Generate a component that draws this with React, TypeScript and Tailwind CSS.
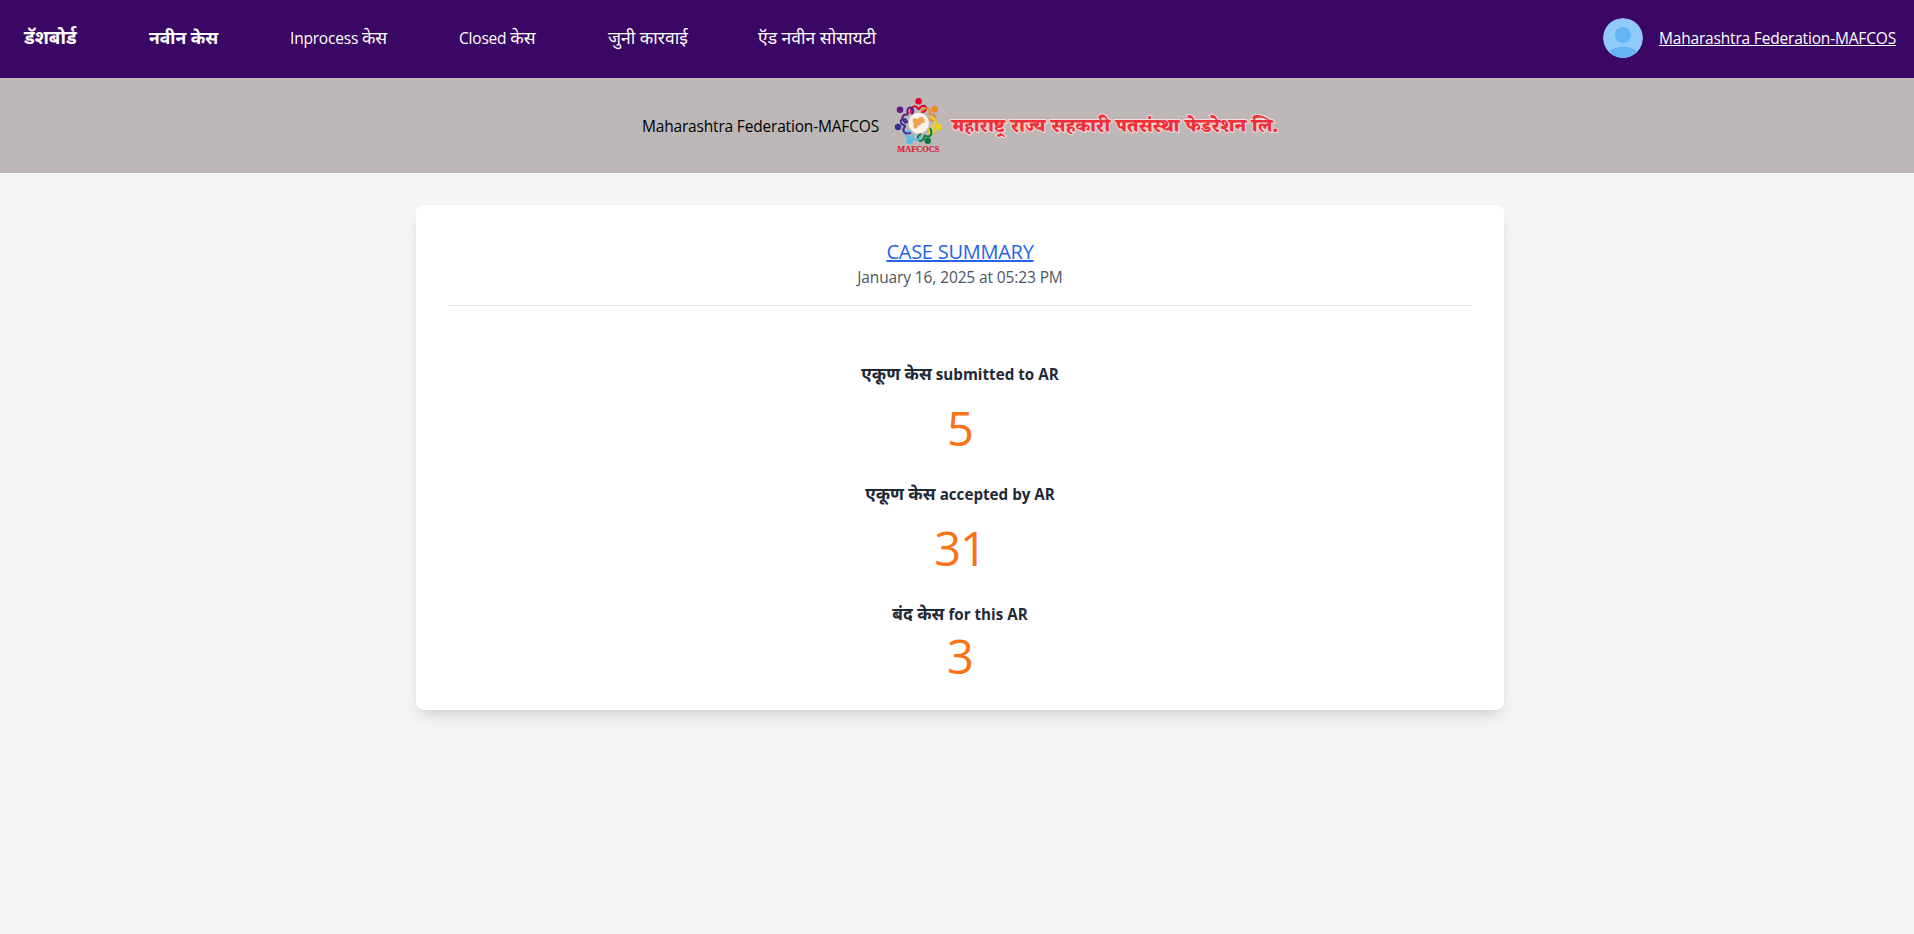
const navItems = [
  { deva: 'डॅशबोर्ड', box: 'w-[125px] font-bold', size: 'text-[18.7px]' },
  { deva: 'नवीन केस', box: 'w-[141px] font-bold', size: 'text-[17.5px]' },
  { latin: 'Inprocess', deva: 'केस', box: 'w-[169px]', size: 'text-[17.5px]' },
  { latin: 'Closed', deva: 'केस', box: 'w-[149px]', size: 'text-[17.5px]' },
  { deva: 'जुनी कारवाई', box: 'w-[150px]', size: 'text-[17.5px]' },
  { deva: 'ऍड नवीन सोसायटी', box: 'w-[130px]', size: 'text-[17.5px]' },
];

const stats = [
  { deva: 'एकूण केस', latin: 'submitted to AR', value: '5', gap: 'mt-[18px]' },
  { deva: 'एकूण केस', latin: 'accepted by AR', value: '31', gap: 'mt-[18px]' },
  { deva: 'बंद केस', latin: 'for this AR', value: '3', gap: 'mt-1.5' },
];

const people = [
  { x: 116, y: 33, turn: 0, color: '#e4032e' },
  { x: 164, y: 57, turn: 51.4, color: '#ee8a1d' },
  { x: 176, y: 110, turn: 102.8, color: '#ecd21c' },
  { x: 143, y: 151, turn: 154.3, color: '#0b7a3b' },
  { x: 89, y: 151, turn: 205.7, color: '#56bdea' },
  { x: 54, y: 110, turn: 257.1, color: '#3b3092' },
  { x: 60, y: 58, turn: 308.6, color: '#5a1f85' },
];

function Avatar() {
  return (
    <svg viewBox="0 0 40 40" className="size-10 shrink-0 rounded-full">
      <circle cx="20" cy="20" r="20" fill="#90caf9" />
      <circle cx="20" cy="17" r="8" fill="#64b5f6" />
      <path d="M6 33.5C9.5 30.5 14.5 28.7 20 28.7s10.5 1.8 14 4.8C30.5 37.5 25.5 40 20 40S9.5 37.5 6 33.5Z" fill="#64b5f6" />
    </svg>
  );
}

function Logo() {
  return (
    <svg viewBox="42 20 150 170" className="h-[56.667px] w-[50px] shrink-0">
      {people.map((p) => (
        <g key={p.color}>
          <circle cx={p.x} cy={p.y} r="9.8" fill={p.color} />
          <path
            d="M92 67C92 46 107 43 115 56M117 56C124 43 140 43 138 57Q136 65 126 65"
            transform={`rotate(${p.turn} 116 98)`}
            fill="none"
            stroke={p.color}
            strokeWidth="5.8"
            strokeLinecap="round"
          />
        </g>
      ))}
      <circle cx="116" cy="98" r="31" fill="#fbf1e8" />
      <path d="M99 85l9-1 4 2 7-5 10-1 1 5 5 2-2 10-7 2-5 5-7 2-3 7-7 2-4-8 1-8-3-6Z" fill="#e8a552" />
      <text
        x="52"
        y="186"
        textLength="126"
        lengthAdjust="spacingAndGlyphs"
        fontSize="21.5"
        fontWeight="700"
        fill="#dc1f40"
        stroke="#dc1f40"
        strokeWidth="0.6"
        className="font-['Liberation_Serif',serif]"
      >
        MAFCOCS
      </text>
    </svg>
  );
}

export default function App() {
  return (
    <div className="min-h-screen bg-[#f5f5f5] font-['Open_Sans','Noto_Sans',sans-serif] text-base text-black">
      <header className="flex h-[78px] items-center bg-[#3b0764] pb-0.5 pl-6 pr-[18px] text-white">
        <nav className="mb-0.5 flex flex-1">
          {navItems.map((n) => (
            <div key={n.box} className={`h-6 whitespace-nowrap leading-6 ${n.box}`}>
              {n.latin && <span className="text-[15.5px] tracking-[-0.2px]">{n.latin} </span>}
              <span className={n.size}>{n.deva}</span>
            </div>
          ))}
        </nav>
        <Avatar />
        <a className="ml-4 w-[237px] whitespace-nowrap text-[15.5px] leading-6 tracking-[-0.18px] underline">
          Maharashtra Federation-MAFCOS
        </a>
      </header>

      <section className="flex h-[95px] items-center bg-[#bdb8b7] pl-[642px]">
        <span className="w-[252px] whitespace-nowrap text-[15.5px] leading-6 tracking-[-0.18px]">
          Maharashtra Federation-MAFCOS
        </span>
        <Logo />
        <span className="ml-2 mt-2 whitespace-nowrap font-['Noto_Serif_Devanagari','Open_Sans',serif] text-[19.6px] font-black text-[#ee3138] [paint-order:stroke_fill] [-webkit-text-stroke:2px_#f6dcdc]">
          महाराष्ट्र राज्य सहकारी पतसंस्था फेडरेशन लि.
        </span>
      </section>

      <main className="ml-[416px] mt-8 h-[505px] w-[1088px] rounded-lg bg-white p-8 text-center shadow-lg">
        <div className="h-[69px] border-b-1 border-[#e5e7eb] pt-px">
          <h1 className="text-xl leading-7 tracking-[-0.25px] text-[#2563eb] underline decoration-2">CASE SUMMARY</h1>
          <p className="-mt-px text-[15.5px] leading-6 tracking-[-0.12px] text-[#4b5563]">January 16, 2025 at 05:23 PM</p>
        </div>
        <div className="mt-14">
          {stats.map((s) => (
            <div key={s.value} className="h-[120px]">
              <h2 className="h-6 font-bold leading-6 text-[#1f2937]">
                <span className="text-[17.3px]">{s.deva}</span> <span className="text-[15.2px]">{s.latin}</span>
              </h2>
              <p className={`text-[47px] leading-12 tracking-[-1px] text-[#f97316] ${s.gap}`}>{s.value}</p>
            </div>
          ))}
        </div>
      </main>
    </div>
  );
}
